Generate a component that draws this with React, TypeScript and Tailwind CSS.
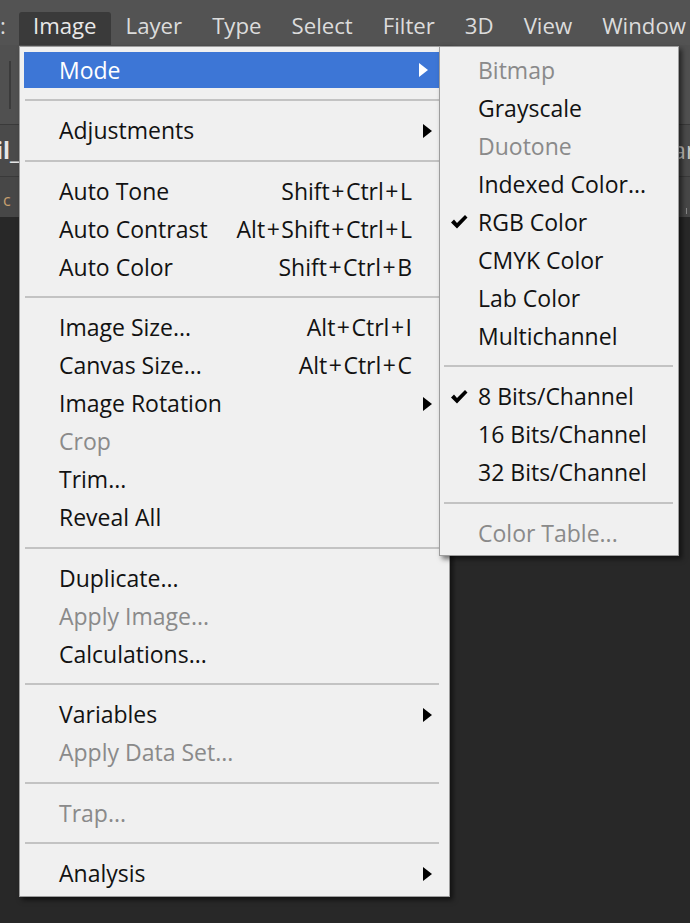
import React from 'react';

type Item = {
  label: string;
  shortcut?: string;
  disabled?: boolean;
  submenu?: boolean;
  checked?: boolean;
  active?: boolean;
};

type Entry = Item | 'sep';

const MENUBAR = ['Layer', 'Type', 'Select', 'Filter', '3D', 'View', 'Window'];

const IMAGE_MENU: Entry[] = [
  { label: 'Mode', submenu: true, active: true },
  'sep',
  { label: 'Adjustments', submenu: true },
  'sep',
  { label: 'Auto Tone', shortcut: 'Shift+Ctrl+L' },
  { label: 'Auto Contrast', shortcut: 'Alt+Shift+Ctrl+L' },
  { label: 'Auto Color', shortcut: 'Shift+Ctrl+B' },
  'sep',
  { label: 'Image Size...', shortcut: 'Alt+Ctrl+I' },
  { label: 'Canvas Size...', shortcut: 'Alt+Ctrl+C' },
  { label: 'Image Rotation', submenu: true },
  { label: 'Crop', disabled: true },
  { label: 'Trim...' },
  { label: 'Reveal All' },
  'sep',
  { label: 'Duplicate...' },
  { label: 'Apply Image...', disabled: true },
  { label: 'Calculations...' },
  'sep',
  { label: 'Variables', submenu: true },
  { label: 'Apply Data Set...', disabled: true },
  'sep',
  { label: 'Trap...', disabled: true },
  'sep',
  { label: 'Analysis', submenu: true },
];

const MODE_MENU: Entry[] = [
  { label: 'Bitmap', disabled: true },
  { label: 'Grayscale' },
  { label: 'Duotone', disabled: true },
  { label: 'Indexed Color...' },
  { label: 'RGB Color', checked: true },
  { label: 'CMYK Color' },
  { label: 'Lab Color' },
  { label: 'Multichannel' },
  'sep',
  { label: '8 Bits/Channel', checked: true },
  { label: '16 Bits/Channel' },
  { label: '32 Bits/Channel' },
  'sep',
  { label: 'Color Table...', disabled: true },
];

const Arrow = ({ white }: { white?: boolean }) => (
  <svg width="9" height="14" viewBox="0 0 9 14" className="absolute right-[17px] top-1/2 -translate-y-1/2">
    <path d="M0 0 L9 7 L0 14 Z" fill={white ? '#ffffff' : '#000000'} />
  </svg>
);

const Check = () => (
  <svg width="18" height="16" viewBox="0 0 18 16" className="absolute left-[10px] top-1/2 -translate-y-1/2">
    <path d="M1 8.5 L4 5.5 L7 9 L15 1 L17.5 3.5 L7 14.5 Z" fill="#000000" />
  </svg>
);

// Photoshop's shortcut text spaces the plus signs a little wider
const Shortcut = ({ text }: { text: string }) => {
  const parts = text.split('+');
  return (
    <span className="ml-auto">
      {parts.map((p, i) => (
        <React.Fragment key={i}>
          {i > 0 && <span className="mx-[1.5px]">+</span>}
          {p}
        </React.Fragment>
      ))}
    </span>
  );
};

const Separator = ({ sub }: { sub?: boolean }) => (
  <div className={`flex h-[22.5px] items-center ${sub ? 'pl-[4px] pr-[5px]' : 'pl-[5px] pr-[10px]'}`}>
    <div className="h-[2px] w-full bg-[#c3c3c3]" />
  </div>
);

const MenuRow = ({ item, sub }: { item: Item; sub?: boolean }) => {
  const textColor = item.active ? 'text-white' : item.disabled ? 'text-[#8a8a8a]' : 'text-[#121212]';
  return (
    <div
      className={`relative flex items-center whitespace-nowrap ${
        item.active ? 'mx-[4px] my-[1px] h-[36px] bg-[#3d76d6] pl-[35px]' : 'h-[38px]'
      } ${!item.active && sub ? 'pl-[38px]' : ''} ${!item.active && !sub ? 'pl-[39px]' : ''} pr-[37px] ${textColor}`}
    >
      {item.checked && <Check />}
      <span>{item.label}</span>
      {item.shortcut && <Shortcut text={item.shortcut} />}
      {item.submenu && <Arrow white={item.active} />}
    </div>
  );
};

const Menu = ({ entries, sub, className }: { entries: Entry[]; sub?: boolean; className: string }) => (
  <div
    className={`absolute top-[46px] border border-[#9d9d9d] bg-[#f0f0f0] pt-[4px] pb-[3px] shadow-[3px_3px_5px_rgba(0,0,0,0.55)] ${className}`}
  >
    {entries.map((e, i) =>
      e === 'sep' ? <Separator key={i} sub={sub} /> : <MenuRow key={i} item={e} sub={sub} />
    )}
  </div>
);

export default function App() {
  return (
    <div className="relative h-[923px] w-[690px] overflow-hidden bg-[#282828] font-['Open_Sans',sans-serif] text-[23px] leading-none">
      {/* Menu bar */}
      <div className="flex h-[45px] items-end whitespace-nowrap bg-[#535353] text-[22.2px] text-[#dcdcdc]">
        <span className="flex h-[33px] w-[6px] shrink-0 items-center overflow-hidden pb-[4px]">:</span>
        <div className="ml-[13px] flex h-[33px] shrink-0 items-center rounded-t-[3px] bg-[#3a3a3a] px-[14px] pb-[4px] text-[#e8e8e8]">
          Image
        </div>
        {MENUBAR.map((m) => (
          <span key={m} className="flex h-[33px] shrink-0 items-center px-[15px] pb-[4px]">
            {m}
          </span>
        ))}
      </div>

      {/* Options bar */}
      <div className="flex h-[80px] items-center border-b border-[#3a3a3a] bg-[#505050] pl-[9px]">
        <div className="h-[48px] w-[2px] bg-[#3b3b3b]" />
      </div>

      {/* Document tabs */}
      <div className="flex h-[52px] items-center justify-between border-b border-[#3a3a3a] bg-[#4a4a4a] font-bold text-[#e6e6e6]">
        <span className="-ml-[4px]">il_</span>
        <span className="-mr-[10px] font-normal text-[#c8c8c8]">an</span>
      </div>

      {/* Ruler strip */}
      <div className="flex h-[40px] items-end justify-between bg-[#474747] px-[3px] pb-[3px] text-[16px] text-[#c8a070]">
        <span className="mb-[6px]">c</span>
        <span className="h-[6px] w-[1px] bg-[#888]" />
      </div>

      <Menu entries={IMAGE_MENU} className="left-[19px] w-[431px]" />
      <Menu entries={MODE_MENU} sub className="left-[439px] w-[240px]" />
    </div>
  );
}
